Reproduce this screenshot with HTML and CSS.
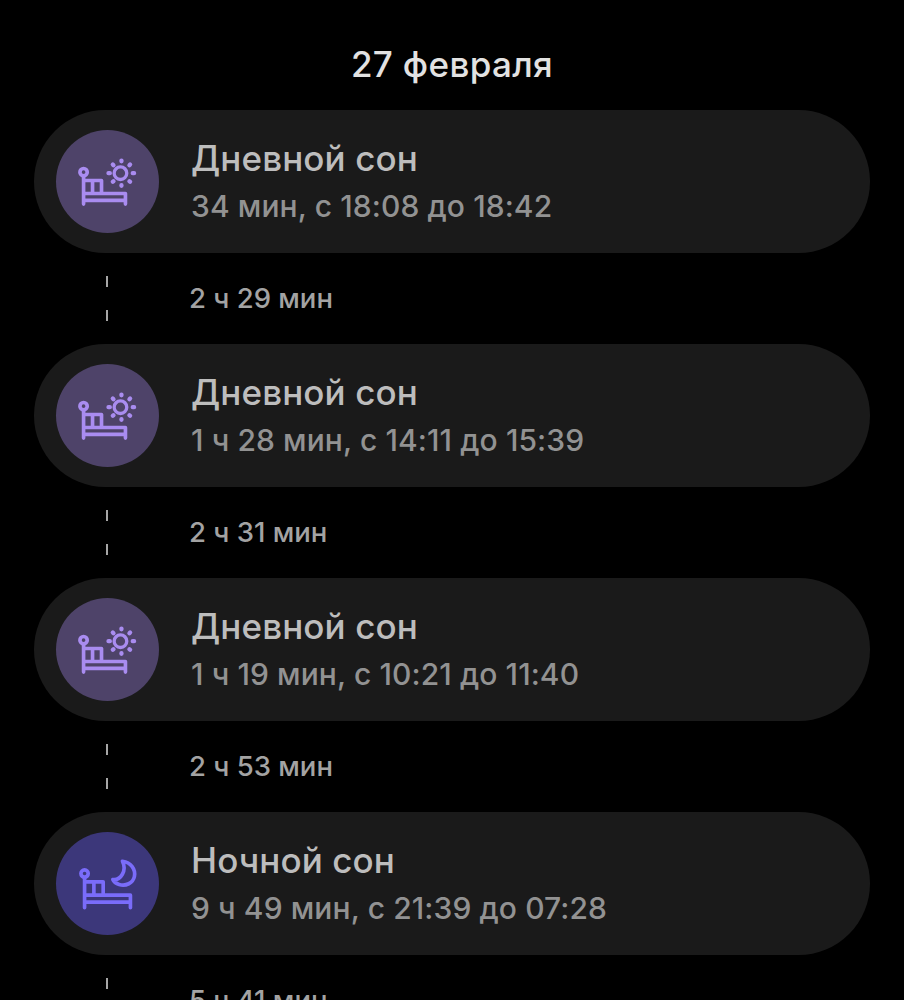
FILE: index.html
```html
<!DOCTYPE html>
<html lang="ru">
<head>
    <meta charset="UTF-8">
    <title>Сон</title>
    <link rel="stylesheet" href="styles.css">
</head>
<body>

<svg class="sprite" width="0" height="0">
    <symbol id="bed" viewBox="0 0 310 310">
        <g fill="none" stroke-width="11" stroke-linecap="round" stroke-linejoin="round" stroke="currentColor">
            <circle cx="83" cy="127" r="11"/>
            <path d="M83 140V223M83 152H137V191M110 152V191M83 191H209V223M83 212H209"/>
        </g>
    </symbol>
    <symbol id="sun" viewBox="0 0 310 310">
        <g fill="none" stroke-width="13" stroke-linecap="round" stroke="currentColor">
            <circle cx="194" cy="130" r="19" stroke-width="10"/>
            <path d="M197 92V94M197 166V168M158 130H162M231 130H235M171 104L173 106M221 154L223 156M171 156L173 154M221 106L223 104"/>
        </g>
    </symbol>
    <symbol id="moon" viewBox="0 0 310 310">
        <path d="M200 88C226 92 240 112 236 134C232 154 210 164 190 158C180 155 174 150 171 143C195 146 214 116 200 88Z" fill="none" stroke="currentColor" stroke-width="11" stroke-linejoin="round"/>
    </symbol>
    <symbol id="bed-night" viewBox="0 0 310 310">
        <g fill="none" stroke-width="11" stroke-linecap="round" stroke-linejoin="round" stroke="currentColor">
            <circle cx="86" cy="125" r="11"/>
            <path d="M86 138V228M86 150H142V190M114 150V190M86 190H224V228M86 211H224"/>
        </g>
    </symbol>
</svg>

<div class="page">
    <h1 class="date">27 февраля</h1>

    <div class="card">
        <div class="badge day">
            <svg class="icon"><use href="#bed"/></svg>
            <svg class="icon"><use href="#sun"/></svg>
        </div>
        <div class="info">
            <div class="name">Дневной сон</div>
            <div class="time">34 мин, с 18:08 до 18:42</div>
        </div>
    </div>
    <div class="gap">
        <div class="dashes"><i></i><i></i></div>
        <div class="awake">2 ч 29 мин</div>
    </div>

    <div class="card">
        <div class="badge day">
            <svg class="icon"><use href="#bed"/></svg>
            <svg class="icon"><use href="#sun"/></svg>
        </div>
        <div class="info">
            <div class="name">Дневной сон</div>
            <div class="time">1 ч 28 мин, с 14:11 до 15:39</div>
        </div>
    </div>
    <div class="gap">
        <div class="dashes"><i></i><i></i></div>
        <div class="awake">2 ч 31 мин</div>
    </div>

    <div class="card">
        <div class="badge day">
            <svg class="icon"><use href="#bed"/></svg>
            <svg class="icon"><use href="#sun"/></svg>
        </div>
        <div class="info">
            <div class="name">Дневной сон</div>
            <div class="time">1 ч 19 мин, с 10:21 до 11:40</div>
        </div>
    </div>
    <div class="gap">
        <div class="dashes"><i></i><i></i></div>
        <div class="awake">2 ч 53 мин</div>
    </div>

    <div class="card">
        <div class="badge night">
            <svg class="icon"><use href="#bed-night"/></svg>
            <svg class="icon"><use href="#moon"/></svg>
        </div>
        <div class="info">
            <div class="name">Ночной сон</div>
            <div class="time">9 ч 49 мин, с 21:39 до 07:28</div>
        </div>
    </div>
    <div class="gap">
        <div class="dashes"><i></i><i></i></div>
        <div class="awake">5 ч 41 мин</div>
    </div>
</div>

</body>
</html>
```

FILE: styles.css
```css
html, body {
    margin: 0;
    padding: 0;
    height: 1000px;
    overflow: hidden;
    background-color: #000;
}

body {
    font-family: Inter, 'Liberation Sans', sans-serif;
}

.sprite {
    display: block;
    height: 0;
}

.page {
    padding: 0 34px;
}

.date {
    margin: 0;
    height: 110px;
    padding-top: 43px;
    box-sizing: border-box;
    font-size: 35px;
    line-height: 42px;
    font-weight: 500;
    letter-spacing: 0.35px;
    text-align: center;
    color: #e2e2e2;
}

.card {
    display: flex;
    align-items: center;
    gap: 32px;
    height: 143px;
    padding-left: 22px;
    border-radius: 72px;
    background-color: #1a1a1a;
}

.badge {
    position: relative;
    flex: none;
    width: 103px;
    height: 103px;
    border-radius: 50%;
}

.badge.day {
    background-color: #4e4369;
    color: #a98cf0;
}

.badge.night {
    background-color: #3c377a;
    color: #7a6cfa;
}

.icon {
    position: absolute;
    top: 0;
    left: 0;
    width: 103px;
    height: 103px;
}

.info {
    margin-top: -1px;
    padding-bottom: 3px;
}

.name {
    font-size: 35px;
    line-height: 44px;
    font-weight: 500;
    letter-spacing: 0.1px;
    color: #bdbdbd;
}

.time {
    margin-top: 8px;
    font-size: 30px;
    line-height: 36px;
    font-weight: 500;
    letter-spacing: 0.1px;
    color: #929292;
}

.gap {
    display: flex;
    height: 91px;
    padding-left: 72px;
}

.dashes {
    display: flex;
    flex-direction: column;
    gap: 23px;
    width: 83px;
    padding-top: 23px;
}

.dashes i {
    display: block;
    width: 2px;
    height: 11px;
    background-color: #a6a6a6;
}

.awake {
    align-self: center;
    margin-top: -2px;
    font-size: 27.5px;
    line-height: 34px;
    font-weight: 500;
    color: #a3a3a3;
}
```
